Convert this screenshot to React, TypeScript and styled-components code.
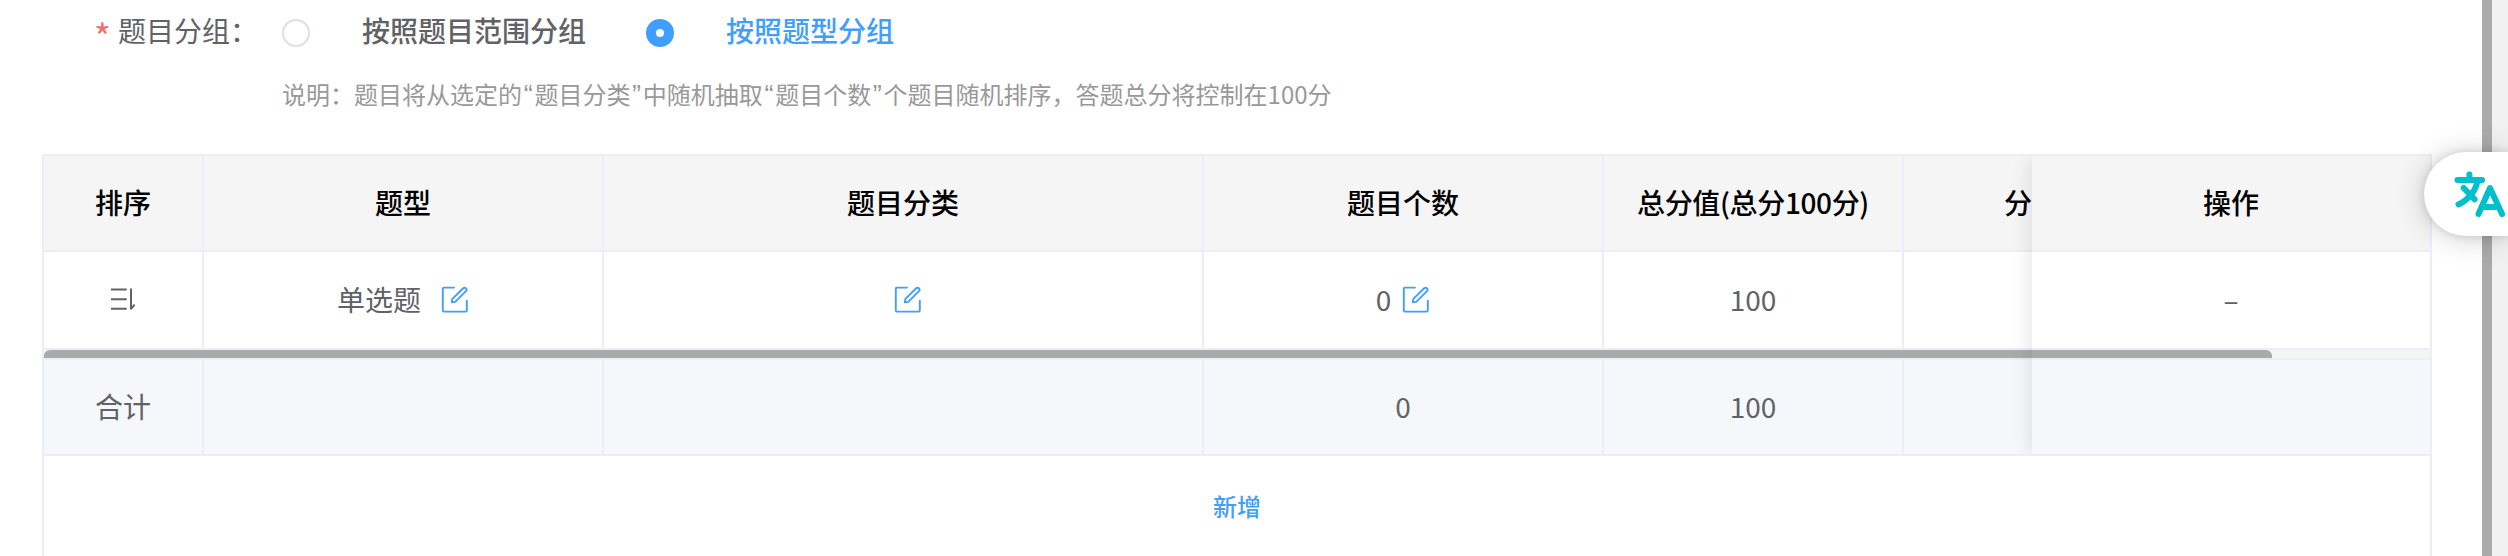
import React from "react";
import styled, { createGlobalStyle, css } from "styled-components";

const GlobalStyle = createGlobalStyle`
  * { box-sizing: border-box; }
  body {
    margin: 0;
    background: #fff;
    color: #606266;
    font-family: "Noto Sans CJK SC", sans-serif;
    font-size: 28px;
  }
`;

const Page = styled.div`
  position: relative;
  display: flex;
  height: 556px;
  overflow: hidden;
`;

const Content = styled.main`
  flex: 1;
  display: flex;
  flex-direction: column;
  padding: 0 50px 0 42px;
`;

const FormRow = styled.div`
  display: flex;
  align-items: center;
  height: 62px;
  padding-left: 54px;
  padding-bottom: 3px;
  white-space: nowrap;
`;

const Label = styled.div`
  display: flex;
  align-items: center;
  width: 186px;
`;

const Required = styled.span`
  width: 24px;
  margin-left: -2px;
  padding-top: 10px;
  font-size: 36px;
  line-height: 36px;
  color: #f56c6c;
`;

const Radio = styled.span<{ $checked?: boolean }>`
  flex: none;
  width: 28px;
  height: 28px;
  margin-top: 7px;
  border-radius: 50%;
  border: ${(p) => (p.$checked ? "10px solid #409eff" : "2px solid #dcdfe6")};
  background: #fff;
`;

const RadioText = styled.span<{ $checked?: boolean; $space: number }>`
  margin-left: 52px;
  margin-right: ${(p) => p.$space}px;
  font-weight: 500;
  color: ${(p) => (p.$checked ? "#409eff" : "#606266")};
`;

const Note = styled.p`
  margin: 0 0 0 240px;
  height: 92px;
  padding-top: 14px;
  font-size: 24px;
  line-height: 36px;
  color: #999;
  white-space: nowrap;
`;

const Quote = styled.span`
  display: inline-block;
  width: 12.4px;
  text-align: center;
  font-family: "Liberation Sans", sans-serif;
  font-size: 27px;
`;

const Panel = styled.section`
  flex: 1;
  display: flex;
  flex-direction: column;
  border: 2px solid #ebeef5;
  border-bottom: 0;
`;

const Table = styled.div`
  position: relative;
  overflow: hidden;
`;

const tones = {
  head: css`
    height: 96px;
    background: #f5f5f5;
    color: #000;
    font-weight: 500;
  `,
  body: css`
    height: 98px;
    background: #fff;
  `,
  total: css`
    height: 98px;
    background: #f5f7fb;
    border-top: 2px solid #ebeef5;
  `,
};

const Row = styled.div<{ $tone: keyof typeof tones }>`
  display: grid;
  grid-template-columns: 160px 400px 600px 400px 300px 128px 1fr;
  border-bottom: 2px solid #ebeef5;
  ${(p) => tones[p.$tone]}
`;

const Cell = styled.div<{ $open?: boolean; $tight?: boolean }>`
  display: flex;
  align-items: center;
  justify-content: center;
  min-width: 0;
  padding-bottom: 3px;
  white-space: nowrap;
  overflow: hidden;
  letter-spacing: ${(p) => (p.$tight ? "-0.35px" : "normal")};
  border-right: ${(p) => (p.$open ? "0" : "2px solid #ebeef5")};
`;

const CutCell = styled(Cell)`
  justify-content: flex-end;
  border-right: 0;
`;

const FixedShadow = styled.div`
  position: absolute;
  top: 0;
  right: 0;
  bottom: 2px;
  width: 398px;
  box-shadow: 0 0 20px rgba(0, 0, 0, 0.12);
  clip-path: inset(0 0 0 -30px);
  pointer-events: none;
`;

const Track = styled.div`
  height: 8px;
  background: #f5f5f5;
`;

const Thumb = styled.div`
  width: 2228px;
  height: 8px;
  border-radius: 6px 6px 0 0;
  background: #aaa;
`;

const AddRow = styled.div`
  display: flex;
  justify-content: center;
  padding-top: 32px;
  font-size: 24px;
  line-height: 36px;
  font-weight: 500;
  color: #409eff;
`;

const PageScroll = styled.aside`
  width: 26px;
  background: #f1f1f1;
`;

const PageThumb = styled.div`
  width: 10px;
  height: 100%;
  background: #aaa;
`;

const TranslateTab = styled.div`
  position: absolute;
  top: 152px;
  right: 0;
  width: 84px;
  height: 84px;
  border-radius: 42px 0 0 42px;
  background: #fff;
  box-shadow: 0 0 8px rgba(0, 0, 0, 0.12), 0 2px 30px rgba(0, 0, 0, 0.2);
`;

const EditSvg = styled.svg<{ $gap: number }>`
  flex: none;
  width: 28px;
  height: 28px;
  margin-top: 3px;
  margin-left: ${(p) => p.$gap}px;
`;

const EditIcon = ({ gap = 10 }: { gap?: number }) => (
  <EditSvg $gap={gap} viewBox="0 0 28 28" fill="none" stroke="#409eff" strokeWidth="1.9" strokeLinecap="round" strokeLinejoin="round">
    <path d="M13 1.6H3Q1.8 1.6 1.8 2.8V24.4Q1.8 25.6 3 25.6H24.6Q25.8 25.6 25.8 24.4V14.8" />
    <path d="M10.8 16.4L11.4 12.9L22.2 2.3Q23.7 1.1 25 2.4Q26.2 3.7 25 5.2L14.2 15.9Z" />
  </EditSvg>
);

const SortSvg = styled.svg`
  width: 28px;
  height: 28px;
  margin-top: 3px;
`;

const SortIcon = () => (
  <SortSvg viewBox="0 0 28 28" fill="none" stroke="#606266" strokeWidth="2">
    <path d="M2 3.5H17.7M2 13.2H17.7M2 22.8H17.7" />
    <path d="M22 2.5V22.8L25.6 18.6" strokeLinejoin="round" />
  </SortSvg>
);

const TranslateIcon = () => (
  <svg width="84" height="84" viewBox="0 0 84 84" fill="none" stroke="#00bfcc" strokeWidth="6" strokeLinecap="round" strokeLinejoin="round">
    <path d="M33.5 28H58M45.4 22.5V28M53.5 28C52.5 38 45 47.5 34.5 52.5M39.7 36L50.6 47.3" />
    <path d="M54.5 62L66 36L78 62M59 55H74" />
  </svg>
);

export default function App() {
  return (
    <>
      <GlobalStyle />
      <Page>
        <Content>
          <FormRow>
            <Label>
              <Required>*</Required>题目分组：
            </Label>
            <Radio />
            <RadioText $space={60}>按照题目范围分组</RadioText>
            <Radio $checked />
            <RadioText $checked $space={0}>按照题型分组</RadioText>
          </FormRow>
          <Note>
            说明：题目将从选定的<Quote>“</Quote>题目分类<Quote>”</Quote>中随机抽取<Quote>“</Quote>题目个数<Quote>”</Quote>个题目随机排序，答题总分将控制在100分
          </Note>
          <Panel>
            <Table>
              <Row $tone="head">
                <Cell>排序</Cell>
                <Cell>题型</Cell>
                <Cell>题目分类</Cell>
                <Cell>题目个数</Cell>
                <Cell $tight>总分值(总分100分)</Cell>
                <CutCell>分</CutCell>
                <Cell $open>操作</Cell>
              </Row>
              <Row $tone="body">
                <Cell><SortIcon /></Cell>
                <Cell>单选题<EditIcon gap={20} /></Cell>
                <Cell><EditIcon /></Cell>
                <Cell>0<EditIcon gap={11} /></Cell>
                <Cell>100</Cell>
                <CutCell />
                <Cell $open>–</Cell>
              </Row>
              <Track>
                <Thumb />
              </Track>
              <Row $tone="total">
                <Cell>合计</Cell>
                <Cell />
                <Cell />
                <Cell>0</Cell>
                <Cell>100</Cell>
                <CutCell />
                <Cell $open />
              </Row>
              <FixedShadow />
            </Table>
            <AddRow>新增</AddRow>
          </Panel>
        </Content>
        <PageScroll>
          <PageThumb />
        </PageScroll>
        <TranslateTab>
          <TranslateIcon />
        </TranslateTab>
      </Page>
    </>
  );
}
